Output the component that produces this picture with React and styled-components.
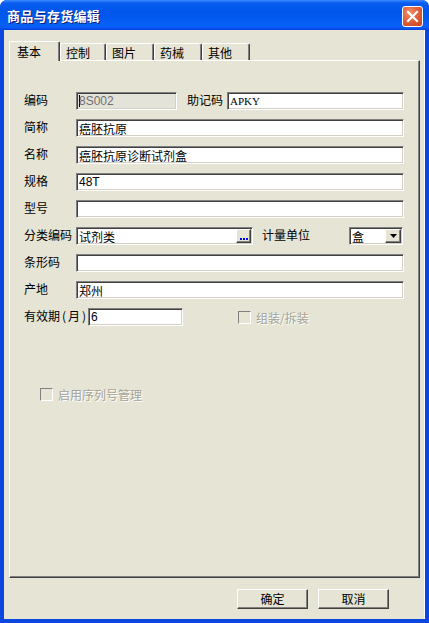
import React from "react";
import styled, { createGlobalStyle } from "styled-components";

const Global = createGlobalStyle`
  html, body { margin: 0; padding: 0; background: #fff; }
  body { width: 429px; height: 623px; overflow: hidden; font-family: "Noto Sans CJK SC", "Liberation Sans", sans-serif; font-size: 12px; }
  * { box-sizing: border-box; }
`;

const FACE = "#E6E5D5";

const Window = styled.div`
  width: 429px;
  height: 623px;
  display: flex;
  flex-direction: column;
  background: #0A46DF;
  border-radius: 7px 7px 0 0;
  overflow: hidden;
`;

const TitleBar = styled.div`
  height: 30px;
  flex: none;
  display: flex;
  align-items: center;
  padding: 0 6px 0 7px;
  background: linear-gradient(to bottom, #3E8BFF 0%, #0A5CF0 10%, #0055EA 40%, #0860F6 85%, #0A5AF8 92%, #0040D6 100%);
`;

const Title = styled.div`
  flex: 1;
  color: #fff;
  font-weight: bold;
  font-size: 13px;
  letter-spacing: 0.3px;
  text-shadow: 1px 1px 0 #0A1E7A;
  padding-top: 1px;
`;

const CloseBtn = styled.div`
  width: 21px;
  height: 21px;
  border: 1px solid #fff;
  border-radius: 3px;
  background: radial-gradient(circle at 35% 30%, #F4906C 0%, #E2603D 45%, #C8421C 100%);
  display: flex;
  align-items: center;
  justify-content: center;
  margin-top: 2px;
`;

const Body = styled.div`
  flex: 1;
  margin: 0 4px 4px 4px;
  background: ${FACE};
  display: flex;
  flex-direction: column;
  padding: 10px 4px 0 5px;
  border-right: 1px solid #fff;
`;

const TabStrip = styled.div`
  height: 20px;
  display: flex;
  align-items: flex-end;
  position: relative;
  z-index: 2;
`;

const Tab = styled.div`
  width: ${(p) => p.$w}px;
  height: ${(p) => (p.$active ? 20 : 17)}px;
  margin-bottom: ${(p) => (p.$active ? -1 : 0)}px;
  background: ${FACE};
  border-top: 1px solid #fff;
  border-left: 1px solid #fff;
  border-right: 1px solid #404040;
  box-shadow: inset -1px 0 0 #808080;
  border-radius: 2px 2px 0 0;
  padding: ${(p) => (p.$active ? "2px 0 0 7px" : "1px 0 0 5px")};
  font-size: 12px;
  line-height: 15px;
  color: #000;
`;

const Panel = styled.div`
  height: 518px;
  flex: none;
  background: ${FACE};
  border-top: 1px solid #fff;
  border-left: 1px solid #fff;
  border-right: 1px solid #404040;
  border-bottom: 1px solid #404040;
  box-shadow: inset -1px -1px 0 #808080;
  padding: 31px 0 0 14px;
  display: flex;
  flex-direction: column;
`;

const Grid = styled.div`
  display: grid;
  grid-template-rows: repeat(9, 18px);
  row-gap: 9px;
`;

const Row = styled.div`
  display: flex;
  align-items: center;
  height: 18px;
`;

const Label = styled.div`
  width: ${(p) => p.$w}px;
  margin-left: ${(p) => p.$ml || 0}px;
  flex: none;
  font-size: 12px;
  color: #000;
  white-space: nowrap;
  margin-top: -3px;
`;

const Paren = styled.span`
  padding: 0 2px;
`;

const Field = styled.div`
  width: ${(p) => p.$w}px;
  height: 18px;
  flex: none;
  position: relative;
  background: ${(p) => (p.$disabled ? "#E4E3DA" : "#fff")};
  border-top: 1px solid #808080;
  border-left: 1px solid #808080;
  border-right: 1px solid #fff;
  border-bottom: 1px solid #fff;
  box-shadow: inset 1px 1px 0 #404040, inset -1px -1px 0 #D4D0C8;
  padding: 0 0 0 2px;
  display: flex;
  align-items: center;
  font-size: ${(p) => (p.$serif ? 11 : 12)}px;
  font-family: ${(p) => (p.$serif ? '"Liberation Serif", serif' : p.$latin ? '"Liberation Sans", sans-serif' : '"Noto Sans CJK SC", sans-serif')};
  color: ${(p) => (p.$disabled ? "#6F6F6F" : "#000")};
  white-space: nowrap;
  overflow: hidden;
`;

const Caret = styled.span`
  display: inline-block;
  width: 1px;
  height: 12px;
  background: #000;
  margin-right: -1px;
`;

const EllipsisBtn = styled.div`
  position: absolute;
  right: 1px;
  top: 1px;
  width: 15px;
  height: 14px;
  background: ${FACE};
  border-top: 1px solid #fff;
  border-left: 1px solid #fff;
  border-right: 1px solid #404040;
  border-bottom: 1px solid #404040;
  box-shadow: inset -1px -1px 0 #808080;
  display: flex;
  align-items: flex-end;
  justify-content: center;
  padding-bottom: 2px;
  gap: 1px;
`;

const Dot = styled.span`
  width: 2px;
  height: 2px;
  background: #0000F0;
`;

const DropBtn = styled.div`
  position: absolute;
  right: 1px;
  top: 1px;
  width: 16px;
  height: 14px;
  background: ${FACE};
  border-top: 1px solid #fff;
  border-left: 1px solid #fff;
  border-right: 1px solid #404040;
  border-bottom: 1px solid #404040;
  box-shadow: inset -1px -1px 0 #808080;
  display: flex;
  align-items: center;
  justify-content: center;
`;

const Check = styled.label`
  display: flex;
  align-items: center;
  gap: 5px;
  margin-left: ${(p) => p.$ml || 0}px;
  margin-top: ${(p) => p.$mt || 0}px;
  color: #A5A396;
  text-shadow: 1px 1px 0 #fff;
  font-size: 12px;
`;

const Box = styled.span`
  width: 13px;
  height: 13px;
  flex: none;
  border-top: 1px solid #808080;
  border-left: 1px solid #808080;
  border-right: 1px solid #fff;
  border-bottom: 1px solid #fff;
  background: ${FACE};
`;

const Footer = styled.div`
  flex: 1;
  display: flex;
  justify-content: flex-end;
  align-items: flex-start;
  gap: 10px;
  padding: 11px 31px 0 0;
`;

const Button = styled.div`
  width: 71px;
  height: 20px;
  background: ${FACE};
  border-top: 1px solid #fff;
  border-left: 1px solid #fff;
  border-right: 1px solid #404040;
  border-bottom: 1px solid #404040;
  box-shadow: inset -1px -1px 0 #808080;
  display: flex;
  align-items: center;
  justify-content: center;
  font-size: 12px;
  color: #000;
  padding-bottom: 1px;
`;

export default function App() {
  const tabs = [
    ["基本", 51],
    ["控制", 46],
    ["图片", 48],
    ["药械", 48],
    ["其他", 48],
  ];
  return (
    <>
      <Global />
      <Window>
        <TitleBar>
          <Title>商品与存货编辑</Title>
          <CloseBtn>
            <svg width="13" height="13" viewBox="0 0 13 13">
              <path d="M2 2 L11 11 M11 2 L2 11" stroke="#fff" strokeWidth="2.2" strokeLinecap="square" />
            </svg>
          </CloseBtn>
        </TitleBar>
        <Body>
          <TabStrip>
            {tabs.map(([t, w], i) => (
              <Tab key={t} $w={w} $active={i === 0}>
                {t}
              </Tab>
            ))}
          </TabStrip>
          <Panel>
            <Grid>
              <Row>
                <Label $w={52}>编码</Label>
                <Field $w={101} $disabled $latin>
                  <Caret />8S002
                </Field>
                <Label $w={40} $ml={10}>助记码</Label>
                <Field $w={177} $serif>APKY</Field>
              </Row>
              <Row>
                <Label $w={52}>简称</Label>
                <Field $w={328}>癌胚抗原</Field>
              </Row>
              <Row>
                <Label $w={52}>名称</Label>
                <Field $w={328}>癌胚抗原诊断试剂盒</Field>
              </Row>
              <Row>
                <Label $w={52}>规格</Label>
                <Field $w={328} $latin>48T</Field>
              </Row>
              <Row>
                <Label $w={52}>型号</Label>
                <Field $w={328} />
              </Row>
              <Row>
                <Label $w={52}>分类编码</Label>
                <Field $w={177}>
                  试剂类
                  <EllipsisBtn>
                    <Dot />
                    <Dot />
                    <Dot />
                  </EllipsisBtn>
                </Field>
                <Label $w={87} $ml={9}>计量单位</Label>
                <Field $w={54}>
                  盒
                  <DropBtn>
                    <svg width="7" height="4" viewBox="0 0 7 4">
                      <path d="M0 0 H7 L3.5 4 Z" fill="#000" />
                    </svg>
                  </DropBtn>
                </Field>
              </Row>
              <Row>
                <Label $w={52}>条形码</Label>
                <Field $w={328} />
              </Row>
              <Row>
                <Label $w={52}>产地</Label>
                <Field $w={328}>郑州</Field>
              </Row>
              <Row>
                <Label $w={64}>
                  有效期<Paren>(</Paren>月<Paren>)</Paren>
                </Label>
                <Field $w={95} $latin>6</Field>
                <Check $ml={55}>
                  <Box />
                  组装/拆装
                </Check>
              </Row>
            </Grid>
            <Check $ml={16} $mt={60}>
              <Box />
              启用序列号管理
            </Check>
          </Panel>
          <Footer>
            <Button>确定</Button>
            <Button>取消</Button>
          </Footer>
        </Body>
      </Window>
    </>
  );
}
